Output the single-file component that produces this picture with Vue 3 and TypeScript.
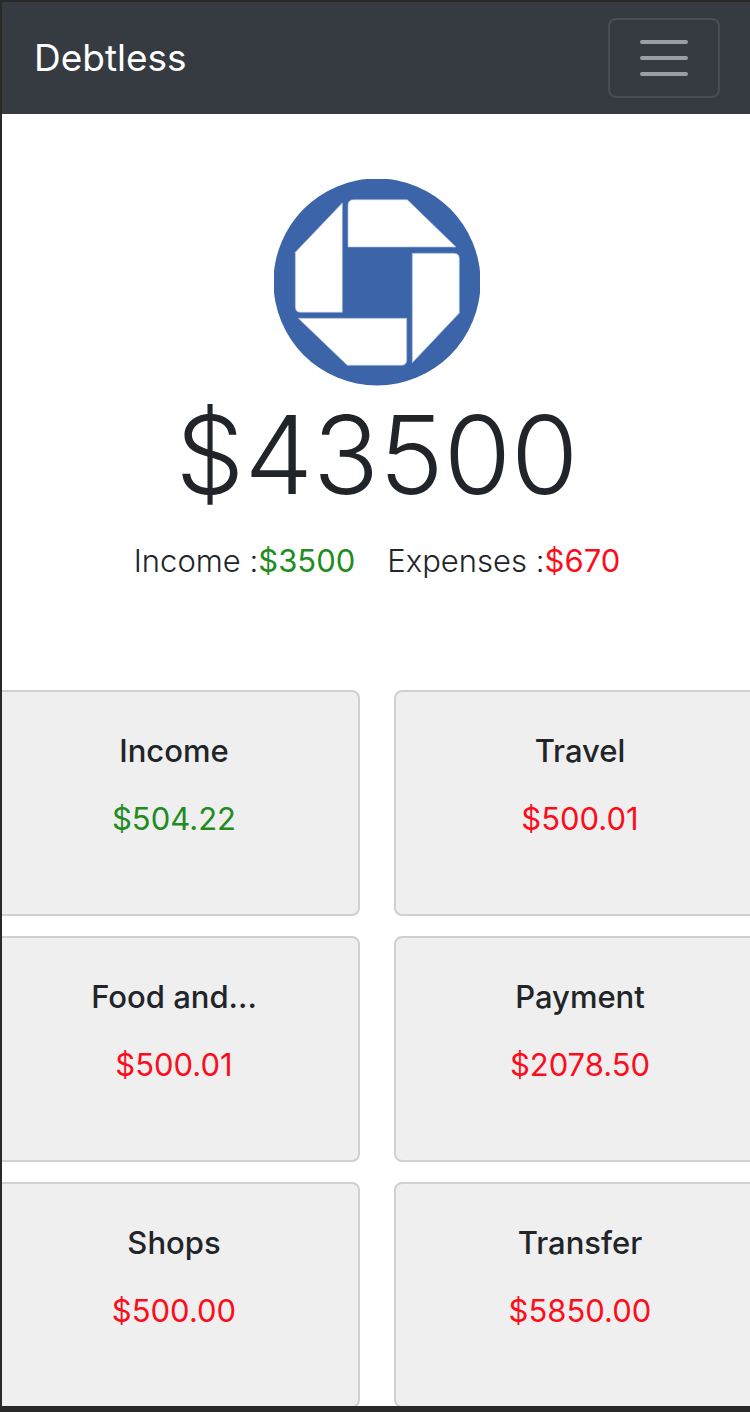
<script setup lang="ts">
import { ref } from 'vue'

interface Category {
  name: string
  amount: string
  kind: 'income' | 'expense'
}

const balance = '$43500'
const menuOpen = ref(false)

const categories: Category[] = [
  { name: 'Income', amount: '$504.22', kind: 'income' },
  { name: 'Travel', amount: '$500.01', kind: 'expense' },
  { name: 'Food and...', amount: '$500.01', kind: 'expense' },
  { name: 'Payment', amount: '$2078.50', kind: 'expense' },
  { name: 'Shops', amount: '$500.00', kind: 'expense' },
  { name: 'Transfer', amount: '$5850.00', kind: 'expense' },
]
</script>

<template>
  <div class="frame">
    <header class="navbar">
      <a class="brand" href="#">Debtless</a>
      <button
        class="toggler"
        type="button"
        aria-label="Toggle navigation"
        :aria-expanded="menuOpen"
        @click="menuOpen = !menuOpen"
      >
        <svg class="bars" viewBox="0 0 60 60" aria-hidden="true">
          <path d="M8 14H52M8 30H52M8 46H52" />
        </svg>
      </button>
    </header>

    <main>
      <section class="summary">
        <svg class="logo" viewBox="0 0 206 207" role="img" aria-label="Bank logo">
          <circle cx="103" cy="103" r="103.5" fill="#3b64a9" />
          <g fill="#fff" stroke="#a9bbdb" stroke-width="0.7">
            <path d="M79.5 20.7H133.3L182 68H74V26.2Q74 20.7 79.5 20.7Z" />
            <path d="M138.3 74.3H179.8Q185.3 74.3 185.3 79.8V134L138.3 183.7Z" />
            <path d="M24.3 139.3H132.7V180.8Q132.7 186.3 127.2 186.3H73.3Z" />
            <path d="M68.3 24V133.3H26.8Q21.3 133.3 21.3 127.8V73.3Z" />
          </g>
        </svg>
        <h1 class="balance">{{ balance }}</h1>
        <div class="totals">
          <p>Income :<span class="income">$3500</span></p>
          <p>Expenses :<span class="expense">$670</span></p>
        </div>
      </section>

      <section class="cards">
        <article v-for="item in categories" :key="item.name" class="card">
          <h2>{{ item.name }}</h2>
          <p :class="item.kind">{{ item.amount }}</p>
        </article>
      </section>
    </main>
  </div>
</template>

<style>
body {
  margin: 0;
  background: #fff;
}
</style>

<style scoped>
.frame {
  box-sizing: border-box;
  min-height: 100vh;
  border: 0 solid #29292a;
  border-width: 2px 0 6px 2px;
  overflow: hidden;
  background: #fff;
  color: #212529;
  font-family: Inter, 'Liberation Sans', sans-serif;
  font-size: 31px;
  line-height: 48px;
}

h1,
h2,
p {
  margin: 0;
}

.navbar {
  display: flex;
  align-items: center;
  justify-content: space-between;
  padding: 16px 30px 16px 32px;
  background: #363a41;
}

.brand {
  color: #fff;
  font-size: 37px;
  text-decoration: none;
}

.toggler {
  display: flex;
  align-items: center;
  justify-content: center;
  box-sizing: border-box;
  width: 112px;
  height: 80px;
  padding: 0;
  border: 2px solid #4a4e51;
  border-radius: 8px;
  background: transparent;
  cursor: pointer;
}

.bars {
  width: 60px;
  height: 60px;
  fill: none;
  stroke: #9a9ea1;
  stroke-width: 4;
  stroke-linecap: round;
}

.summary {
  display: flex;
  flex-direction: column;
  align-items: center;
  padding: 65px 0 105px 2px;
}

.logo {
  display: block;
  width: 206px;
  height: 207px;
}

.balance {
  font-size: 109px;
  font-weight: 300;
  line-height: 136px;
}

.totals {
  display: flex;
  gap: 32px;
  margin-top: 15px;
  font-weight: 300;
}

.totals span {
  font-weight: 400;
}

.cards {
  display: grid;
  grid-template-columns: 1fr 1fr;
  gap: 20px 34px;
  margin: 0 -16px -2px -14px;
}

.card {
  box-sizing: border-box;
  min-height: 226px;
  padding: 35px 38px;
  border: 2px solid #d0d0d0;
  border-radius: 8px;
  background: #efefef;
  text-align: center;
}

.card h2 {
  margin-bottom: 20px;
  font-size: 31px;
  font-weight: 500;
}

.income {
  color: #228b22;
}

.expense {
  color: #fc0d1b;
}
</style>
